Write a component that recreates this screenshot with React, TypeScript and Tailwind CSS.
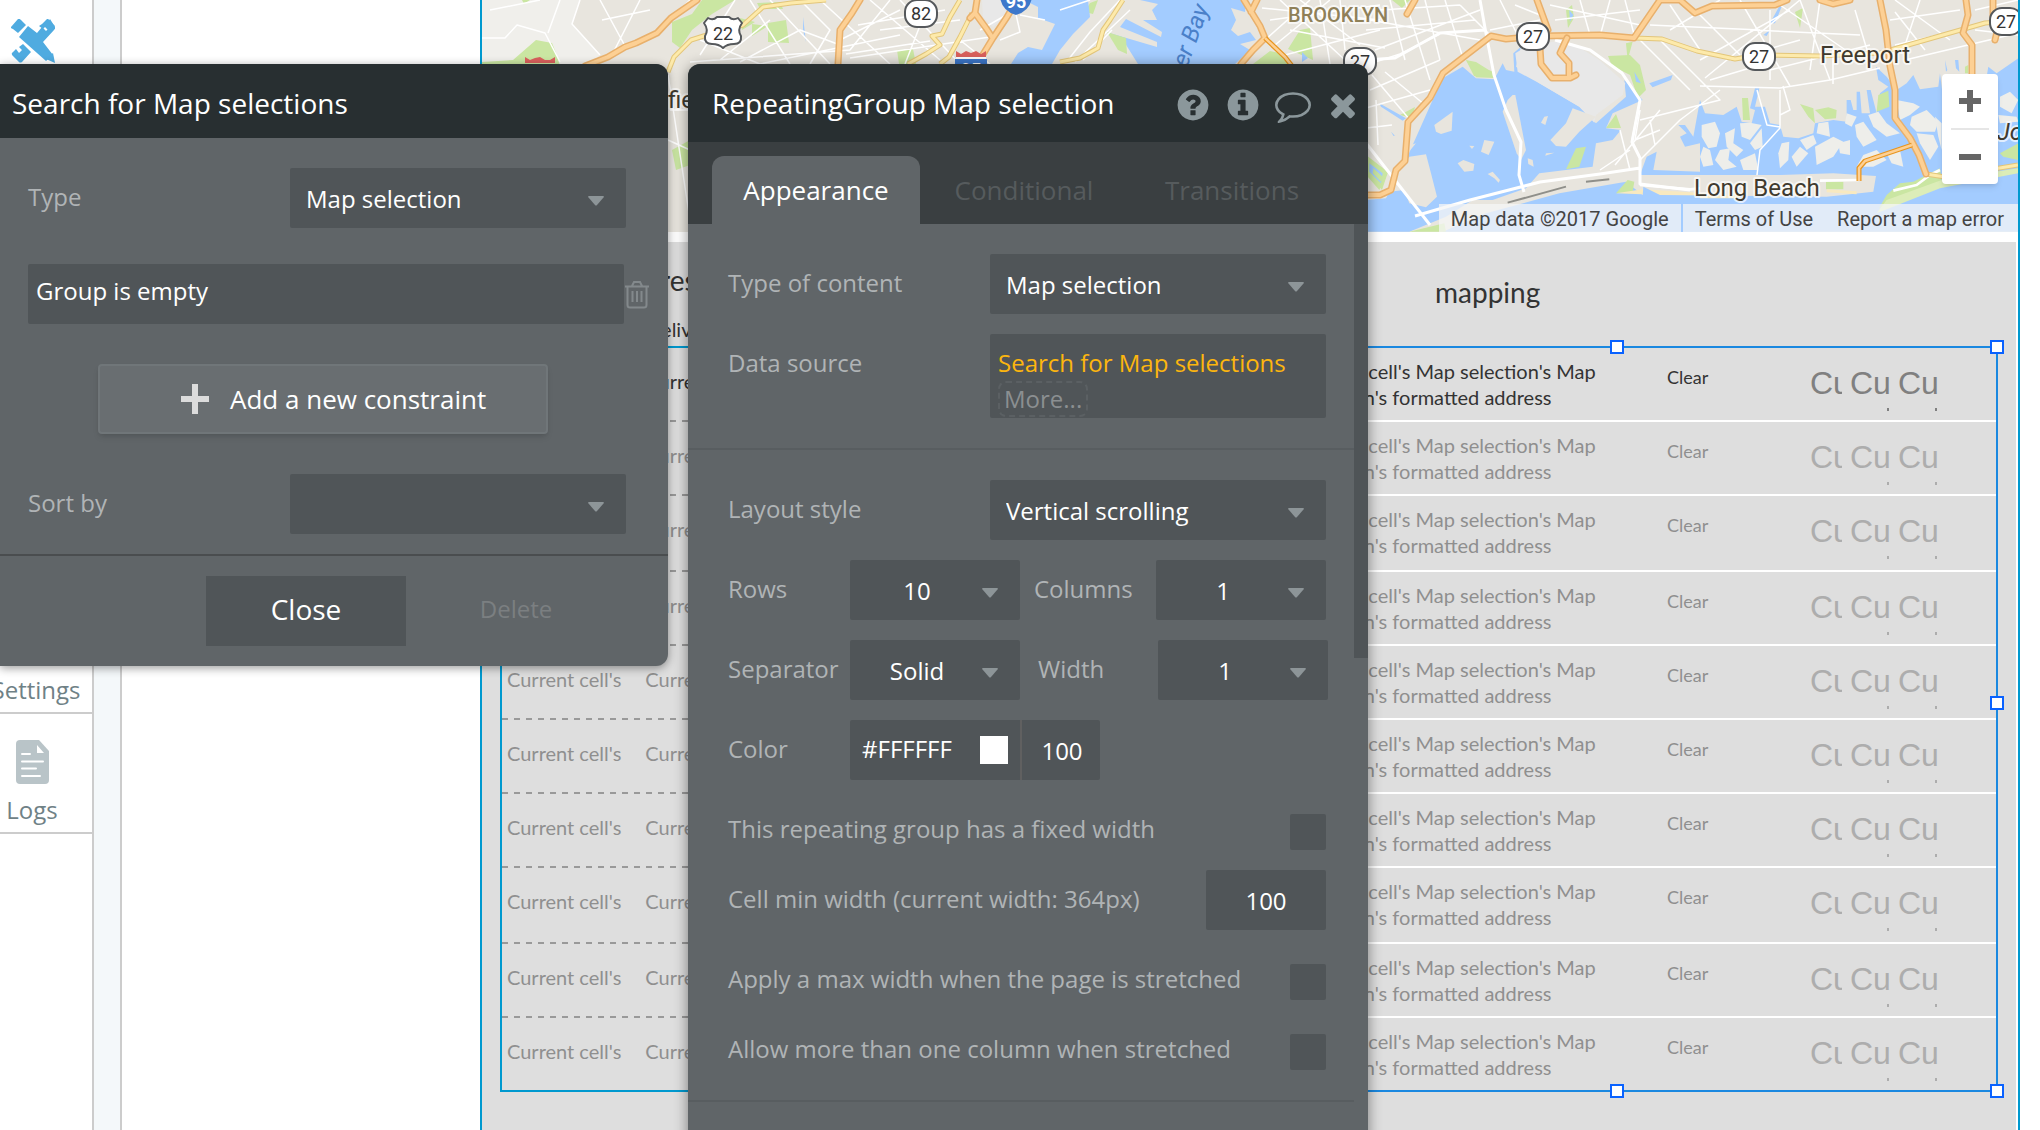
import { FC, ReactNode } from 'react';

const TITLE = 'font-["Open_Sans",sans-serif] text-[28px]';
const BODY = 'font-["Open_Sans",sans-serif] text-2xl';
const ACTION = 'font-["Open_Sans",sans-serif] text-[26px]';

/* ---------- icons ---------- */

const ICONS = {
  question:
    'M1024 1376v-192q0-14-9-23t-23-9h-192q-14 0-23 9t-9 23v192q0 14 9 23t23 9h192q14 0 23-9t9-23zm256-672q0-88-55.5-163t-138.5-116-170-41q-243 0-371 213-15 24 8 42l132 100q7 6 19 6 16 0 25-12 53-68 86-92 34-24 86-24 48 0 85.5 26t37.5 59q0 38-20 61t-68 45q-63 28-115.5 86.5t-52.5 125.5v36q0 14 9 23t23 9h192q14 0 23-9t9-23q0-19 21.5-49.5t54.5-49.5q32-18 49-28.5t46-35 44.5-48 28-60.5 12.5-81zm384 192q0 209-103 385.5t-279.5 279.5-385.5 103-385.5-103-279.5-279.5-103-385.5 103-385.5 279.5-279.5 385.5-103 385.5 103 279.5 279.5 103 385.5z',
  info: 'M1152 1376v-160q0-14-9-23t-23-9h-96v-512q0-14-9-23t-23-9h-320q-14 0-23 9t-9 23v160q0 14 9 23t23 9h96v320h-96q-14 0-23 9t-9 23v160q0 14 9 23t23 9h448q14 0 23-9t9-23zm-128-896v-160q0-14-9-23t-23-9h-192q-14 0-23 9t-9 23v160q0 14 9 23t23 9h192q14 0 23-9t9-23zm640 416q0 209-103 385.5t-279.5 279.5-385.5 103-385.5-103-279.5-279.5-103-385.5 103-385.5 279.5-279.5 385.5-103 385.5 103 279.5 279.5 103 385.5z',
  comment:
    'M896 384q-204 0-381.5 69.5t-282 187.5-104.5 255q0 112 71.5 213.5t201.5 175.5l87 50-27 96q-24 91-70 172 152-63 275-171l43-38 57 6q69 8 130 8 204 0 381.5-69.5t282-187.5 104.5-255-104.5-255-282-187.5-381.5-69.5zm896 512q0 174-120 321.5t-326 233-450 85.5q-70 0-145-8-198 175-460 242-49 14-114 22h-5q-15 0-27-10.5t-16-27.5v-1q-3-4-.5-12t2-10 4.5-9.5l6-9 7-8.500 8-9q7-8 31-34.5t34.5-38 31-39.5 32.5-51 27-59 26-76q-157-89-247.5-220t-90.5-281q0-174 120-321.5t326-233 450-85.5 450 85.5 326 233 120 321.5z',
  times:
    'M1490 1322q0 40-28 68l-136 136q-28 28-68 28t-68-28l-294-294-294 294q-28 28-68 28t-68-28l-136-136q-28-28-28-68t28-68l294-294-294-294q-28-28-28-68t28-68l136-136q28-28 68-28t68 28l294 294 294-294q28-28 68-28t68 28l136 136q28 28 28 68t-28 68l-294 294 294 294q28 28 28 68z',
};

const HeaderButton: FC<{ icon: keyof typeof ICONS; label: string }> = ({ icon, label }) => (
  <button type="button" aria-label={label} className="text-[#8b979b]">
    <svg viewBox="0 0 1792 1792" className="size-9" fill="currentColor">
      <path d={ICONS[icon]} />
    </svg>
  </button>
);

const DesignIcon = () => (
  <svg viewBox="0 0 44 44" className="h-11 w-11" fill="#4fabe0">
    <path d="M0 8 7 0Q8-1 10 1L15 6 7 14 2 10Q-1 9 0 8Z" />
    <path d="M17 7 26 14 31 8 35 12 38 9 35 6 39 0 44 8Q45 9 43 11L32 23 42 36 35 42 8 18Z" />
    <path d="M31 5 36 0Q37-1 38 1L44 7 39 13 34 8 32 10 28 7Z" />
    <path d="M12 25 20 33 11 43Q9 44 8 43L1 36Q0 34 2 33L5 30 8 34 11 31 8 28Z" />
    <path d="M35 40 42 34 44 44Z" />
  </svg>
);

const LogsIcon = () => (
  <svg viewBox="0 0 33 44" className="h-11 w-[33px]">
    <path d="M4 0H23L33 11V40Q33 44 29 44H4Q0 44 0 40V4Q0 0 4 0Z" fill="#b9c4c8" />
    <path d="M21 5 28 13H21Z" fill="#fff" />
    <path d="M6 14H14M6 21.500H27M6 28.500H20M6 36H24" stroke="#fff" strokeWidth="2" strokeLinecap="round" />
  </svg>
);

const TrashIcon = () => (
  <svg viewBox="0 0 26 29" className="h-[29px] w-[26px]" fill="none" stroke="#83898c" strokeWidth="2">
    <path d="M1 6.500H25M8 6 10 2H16L18 6M3.500 7V25Q3.500 27.500 6 27.500H20Q22.500 27.500 22.500 25V7M8.500 11V22M13 11V22M17.500 11V22" />
  </svg>
);

/* ---------- form controls ---------- */

interface DropdownProps {
  id: string;
  value?: string;
  centered?: boolean;
  className: string;
}

const Dropdown: FC<DropdownProps> = ({ id, value = '', centered, className }) => (
  <div className={`relative h-15 ${className}`}>
    <select
      id={id}
      defaultValue={value}
      className={`${BODY} h-full w-full appearance-none rounded-xs bg-[#505558] pt-0.5 text-white ${
        centered ? 'pr-9 text-center' : 'pl-4'
      }`}
    >
      <option>{value}</option>
    </select>
    <svg viewBox="0 0 16 10" className="pointer-events-none absolute top-7 right-[22px] h-2.5 w-4" fill="#8d9598">
      <path d="M1 0H15Q16.500 0 15.500 1.500L9 9Q8 10 7 9L.5 1.500Q-.5 0 1 0Z" />
    </svg>
  </div>
);

const Label: FC<{ htmlFor: string; className?: string; children: ReactNode }> = ({ htmlFor, className = '', children }) => (
  <label htmlFor={htmlFor} className={`${BODY} leading-[58px] whitespace-nowrap text-[#b0b4b6] ${className}`}>
    {children}
  </label>
);

const CheckRow: FC<{ id: string; text: string }> = ({ id, text }) => (
  <div className="flex h-[50px] items-start justify-between">
    <Label htmlFor={id}>{text}</Label>
    <input id={id} type="checkbox" className="size-9 appearance-none self-end rounded-xs bg-[#505558]" />
  </div>
);

/* ---------- map ---------- */

const MARSH = [
  '5,375 45,365 60,400 50,440 25,445 5,410',
  '75,400 105,385 100,430 130,450 110,470 80,440',
  '120,370 150,368 185,375 150,420 125,410',
  '150,430 185,385 188,440 165,450',
  '60,450 90,445 85,480 110,500 70,510 45,480',
  '10,440 30,450 40,495 10,500 0,470',
  '120,480 165,460 175,510 130,510',
  '245,430 268,425 265,480 240,505 235,460',
  '300,420 340,405 350,430 320,450',
  '275,470 300,440 325,460 290,500',
  '355,370 385,365 390,410 350,400',
  '345,440 400,410 430,425 400,470 350,495',
  '440,340 470,350 455,380 435,370',
  '465,375 490,365 530,420 490,440 470,410',
  '415,430 450,420 450,465 420,460',
  '505,345 535,335 560,370 600,400 560,410 520,380',
  '490,465 530,450 560,480 520,500 470,500',
  '560,460 600,450 610,500 575,490',
  '590,300 640,310 660,320 630,345 600,360',
  '635,350 680,330 715,365 705,395 650,395 630,375',
  '650,400 700,405 715,440 690,480 660,430',
  '705,350 725,370 725,450 715,410',
  '900,290 930,275 955,300 935,340 900,320',
  '895,345 950,350 955,365 900,370',
];

const ISLANDS = [
  '260,335 205,375 210,395 225,402 257,392',
  '355,420 385,425 368,465 345,455',
  '275,490 292,480 325,492 322,512 295,515',
  '310,437 325,438 318,447',
  '365,522 380,515 402,540 398,548 385,535',
  '485,475 500,480 503,500 487,492',
  '535,350 546,348 538,375 525,368',
  '540,460 565,458 538,467',
  '440,285 448,285 480,450 465,480 452,460 410,335 425,300',
  '620,325 690,350 640,395 600,440 570,438 553,420 600,370',
  '40,420 110,400 120,440 150,430 125,460 70,480 40,460',
  '130,470 180,463 195,520 213,590 180,622 130,610 115,570 70,575 90,520',
];

const ORANGE = [
  'M697 0 671 18 657 33 636 43 625 47 608 57 585 66',
  'M860 0 852 13 840 30 838 64',
  'M977 0 975 13 970 18M975 13 986 28 992 37M1017 0 1007 17 993 38 982 56 978 66',
  'M1244 0 1260 26 1265 38 1253 50 1241 64M1257 0 1251 12',
  'M1415 0 1407 14',
  'M1366 195H1380L1391 190 1396 170 1405 161 1408 122 1430 98 1443 73 1491 36 1506 39 1540 36 1600 35 1634 38 1660 0H1680L1695 13 1712 6 1775 5 1787 0M1820 0 1833 4 1850 0',
  'M1537 0 1548 30M1540 48 1541 64 1552 78 1570 78 1576 75M1567 38 1560 53 1569 63V77',
  'M1880 0 1886 30 1890 66 1895 90 1895 118 1910 138 1919 155 1926 174',
  'M1966 0 1968 15 1963 33 1972 45V80M1993 0V20L1997 32 1995 40',
];

const YELLOW = [
  'M668 72 674 57 691 40 710 34 743 25 763 7 791 3 826 0',
  'M960 0 950 17 942 34 932 36 940 45 926 54 908 64',
  'M972 13 960 37 949 57 940 64',
  'M1123 0 1110 20 1103 30 1098 48 1080 58 1060 62',
  'M1634 38 1662 39 1697 51 1735 59 1759 55 1820 56 1880 53 1985 23 1998 22',
  'M1926 174 1945 177 2018 165',
];

const STREETS = [
  'M482 38 505 38 517 25 545 33 560 62M490 10 540 0M580 0 572 24 600 55M560 0 548 33',
  'M600 0 625 46M640 0 612 55M650 10 602 20M690 0 655 36M668 75 690 220M670 110H690M668 140 690 150',
  'M700 55 735 0M720 60 770 20M740 62 800 30 840 45M750 0 790 64M700 40 760 64 900 35M690 62 850 50M770 0 830 64M800 0 830 30 810 64M820 0 890 64M840 40 900 10M870 0 940 60M850 50 890 0M880 30 960 20M858 25 945 10M846 54 930 41M850 58 990 37M900 0 960 64M930 0 905 64M960 40 990 64M980 30 1015 10 1020 32 1000 40M1020 15 1045 20',
  'M1068 60 1090 32 1120 0M1075 62 1130 10M1083 60 1112 30M1090 0 1060 10',
  'M1265 40 1310 0M1275 45 1330 0M1280 0 1345 60M1262 8 1380 20M1270 20 1380 5M1290 30 1385 48M1300 0 1360 45M1320 0 1330 64M1340 0 1345 50M1285 55 1380 30',
  'M1366 65 1400 54 1440 34M1370 20 1480 40M1366 30 1475 20M1380 10 1460 5M1375 50 1480 10M1390 0 1405 60M1405 0 1430 80M1425 0 1440 60M1445 0 1462 55M1460 5 1490 35M1370 90 1440 60M1366 108 1430 90M1372 75 1410 120M1376 100 1378 145M1366 128 1392 125M1385 72 1425 105',
  'M1490 30 1540 20M1500 0 1520 40M1515 5 1540 15M1550 5 1640 25M1555 20 1640 10M1580 0 1590 35M1610 0 1600 36M1625 0 1635 38M1640 40 1690 90M1660 40 1720 100 1640 120M1650 25 1760 30M1670 5 1700 50M1670 30 1720 0M1700 15 1740 55M1700 60 1790 10M1710 80 1760 65M1705 78 1800 0M1700 86 1780 88 1830 80 1880 68',
  'M1640 110 1635 140 1660 130M1640 160 1680 120 1720 90M1630 150 1600 170M1615 165 1660 110M1620 130 1630 170M1650 120 1655 145M1632 140 1640 100M1780 90V128L1760 150 1757 175M1783 86 1790 110 1780 115M1757 90 1767 125 1780 127',
  'M1730 60 1800 40M1740 0 1790 86M1770 10V80M1800 0 1830 80M1750 30 1860 35M1770 70 1870 45M1780 5 1860 60M1820 0 1810 70M1855 10 1870 60M1895 45 1960 30M1895 0 1950 40M1920 0 1905 45M1890 20 1960 10M1905 60 2010 35M1975 30 2018 35M1975 10 2018 0M1833 50V84M1895 12 1925 50',
];

const RouteBadge: FC<{ x: number; y: number; n: string }> = ({ x, y, n }) => (
  <g>
    <rect x={x - 16} y={y - 13} width="32" height="27" rx="12" fill="#fff" stroke="#55585b" strokeWidth="2" />
    <text x={x} y={y + 7} textAnchor="middle" fontSize="18" fill="#333">
      {n}
    </text>
  </g>
);

const MapDrawing = () => (
  <svg
    viewBox="482 0 1536 232"
    preserveAspectRatio="xMaxYMin slice"
    className="block h-[232px] w-full font-[Roboto,sans-serif]"
    fill="none"
    strokeLinejoin="round"
  >
    <rect x="482" width="1536" height="232" fill="#e8e5de" />
    <path d="M482 0H580L572 24 600 55 590 64H482Z" fill="#f0efeb" />

    {/* parks */}
    <g fill="#cae6a2">
      <path d="M522 0H530L524 4ZM482 62 513 60 536 40 552 43 556 53 560 66H482ZM672 22 692 14 702 0H735L712 14 692 30 680 48 672 42Z" />
      <path d="M740 18 755 22 742 30ZM768 23 786 20 789 43 768 42ZM752 24 768 26 752 36ZM757 3 780 2 783 9 760 9ZM897 50 913 49 916 64H899ZM672 150 690 140V165L676 170Z" />
      <path d="M1300 30 1310 28 1313 60 1288 49ZM1090 3 1098 0 1093 14 1085 12Z" />
      <path d="M1253 64 1270 51 1284 54 1292 64ZM1392 0H1410L1402 8Z" />
      <path d="M1366 155 1388 172 1382 190 1366 170ZM1466 60 1476 62 1492 72 1494 77 1474 76ZM1400 115 1415 107 1412 118Z" />
      <path d="M1566 10 1572 5 1574 18 1568 28ZM1608 56 1630 55 1640 65 1646 90 1638 98 1630 75 1612 66Z" />
      <path d="M1606 128 1616 114 1621 128ZM1795 12 1803 8 1800 28ZM1742 98H1748L1750 120 1743 120Z" />
    </g>

    {/* bays west of Brooklyn */}
    <g fill="#a3ccff">
      <path d="M1028 0H1088L1090 17 1073 34 1060 50 1052 64H1011L1018 53 1028 47 1042 50 1055 24 1038 18 1038 7 1030 3Z" />
      <path d="M1140 0 1158 4 1152 10 1157 20 1143 20 1162 32 1161 37 1126 19 1120 27 1157 42 1157 47 1106 32 1123 40 1138 64H1235L1250 50 1240 44 1256 40 1250 32 1238 36 1231 30 1236 20 1231 8 1245 12 1246 0Z" />
      <path d="M803 17 806 42 803 30ZM1302 52 1308 58 1302 62Z" />
    </g>
    <path d="M1107 32 1126 38 1127 54 1118 50Z" fill="#cae6a2" />
    <path d="M982 0H1003L1007 15 993 27 983 17Z" fill="#e8e8e8" />

    {/* Jamaica bay */}
    <g transform="translate(1366 0) scale(.3333)">
      <path
        d="M235 238 262 225 240 285 220 260ZM230 235 290 200 330 235 385 238 410 190 420 210 445 215 442 160 465 140 450 200 520 250 640 320 690 370 780 290 775 240 830 300 740 340 720 385 765 390 740 420 690 430 680 500 600 510 520 520 480 565 380 600 320 600 240 650 130 695H0V600L60 595 120 480 200 300Z"
        fill="#a3ccff"
      />
      <path d="M40 310 120 355 110 362 45 320ZM75 395 120 440 110 455ZM230 695 360 640 580 580 780 545 830 585 1020 590V695Z" fill="#a3ccff" />
      <path d="M448 160 480 140 560 125 620 130 700 180 778 250 770 285 690 345 685 368 640 320 520 250 455 215Z" fill="#e8e8e8" />
      {ISLANDS.map((points) => (
        <polygon key={points} points={points} fill="#e8e5de" />
      ))}
      <path d="M630 445 660 440 640 500 600 508ZM10 480 65 520 40 570 5 530ZM300 180 345 205 385 215V234L330 232ZM750 580 785 540 805 545 800 575ZM130 695 235 670 240 695ZM780 130 800 125 785 180Z" fill="#cae6a2" />
      <path d="M10 490 50 520 45 550 10 515Z" fill="#a3ccff" />
      <path d="M22 505 50 530 45 545 20 520Z" fill="#cae6a2" />
      <path d="M850 250 920 225 915 240 860 262ZM805 215 825 250 810 245ZM610 30 622 45 612 65Z" fill="#a3ccff" />
      <path d="M750 580 830 568 1020 580V590Z" fill="#f8e9c0" />
      <path d="M425 608 600 560M660 545 730 538" stroke="#8f8f8a" strokeWidth="6" />
    </g>

    {/* south shore marshes */}
    <g transform="translate(1700 0) scale(.3333)">
      <path
        d="M0 300 15 340 70 345 110 320 125 365 155 370 165 330 150 325 165 265 178 265 165 320 195 320 210 370 240 375 250 410 295 415 340 400 345 370 400 360 440 365 440 300 452 300 460 330 470 330 470 275 480 275 485 340 510 340 500 270 512 270 530 340 540 280 565 260 535 240 528 200 560 230 590 270 620 250 640 225 660 268 715 260 720 220 730 300 800 240 860 230 865 200 890 220 955 175V695H-180L-170 560-120 585 380 590 520 575 528 528 400 520 240 525H-180L-160 470-130 455-140 510 0 515 0 430-45 440-60 410-40 400-65 375-45 375-20 410Z"
        fill="#a3ccff"
      />
      <path d="M765 180 775 180 778 215 768 205ZM735 180 742 210 738 215ZM210 70 240 15 248 12 225 70ZM190 105 210 90 200 108Z" fill="#a3ccff" />
      {MARSH.map((points) => (
        <polygon key={points} points={points} fill="#eeeeea" />
      ))}
      <path d="M300 312 340 325 345 370 325 350ZM345 330 385 322 410 330 408 355 375 358ZM535 285 565 272 568 320 530 335ZM378 545 430 545V568H378ZM537 625 560 585 600 550 640 545 720 505 725 540 690 570 620 600ZM795 200 805 195V220H795ZM900 460 955 430V480L910 470Z" fill="#cae6a2" />
      <path d="M530 640 560 600 725 540 955 505V520L720 565Z" fill="#dcedb8" />
      <path d="M0 590H120M380 572 470 578" stroke="#f8e9c0" strokeWidth="9" />
      <path d="M-180 555-30 568 0 565M360 542 475 540M580 572 650 555 690 525 720 510" stroke="#fff" strokeWidth="8" />
    </g>

    {/* roads */}
    {STREETS.map((d) => (
      <path key={d} d={d} stroke="#fff" strokeWidth="1.5" />
    ))}
    <path
      d="M1480 0 1485 28 1494 75 1506 110 1521 142 1519 175 1524 192M1366 143 1430 225M1555 40 1590 50 1622 73 1640 100 1632 142 1640 158V184L1690 190M1415 216 1470 200 1540 182 1600 174 1640 168M1366 60 1395 58 1440 33 1486 30"
      stroke="#fff"
      strokeWidth="3"
    />
    {YELLOW.map((d) => (
      <g key={d}>
        <path d={d} stroke="#e3c67a" strokeWidth="5" />
        <path d={d} stroke="#fdeaab" strokeWidth="3" />
      </g>
    ))}
    {ORANGE.map((d) => (
      <g key={d} strokeLinecap="round">
        <path d={d} stroke="#e8b06c" strokeWidth="7" />
        <path d={d} stroke="#fdd094" strokeWidth="4" />
      </g>
    ))}
    <path d="M1265 38 1285 57 1292 66M1912 145 1865 161 1859 168V181" stroke="#e8951f" strokeWidth="5" />
    <path d="M1265 38 1285 57 1292 66M1912 145 1865 161 1859 168V181" stroke="#fdd094" strokeWidth="2.500" />

    {/* shields and place names */}
    <path d="M708 18Q713 21 717 17H729Q733 21 738 18L742 23Q737 30 741 36 742 44 734 44 727 44 723 48 719 44 712 44 704 44 705 36 709 30 704 23Z" fill="#fff" stroke="#55585b" strokeWidth="2" />
    <text x="723" y="40" textAnchor="middle" fontSize="18" fill="#333">22</text>
    <path d="M1000-8H1032Q1033 10 1016 15 999 10 1000-8Z" fill="#3d78cb" />
    <text x="1016" y="8" textAnchor="middle" fontSize="18" fontWeight="700" fill="#fff">95</text>
    <path d="M956 51 961 54 966 51 971 53 976 51 981 54 986 51V57H956ZM525 57 530 60 535 58 540 57 545 60 550 60 555 57V63H525Z" fill="#d9605c" />
    <path d="M956 57H986V59H956Z" fill="#fff" />
    <path d="M955 59H987V80H955Z" fill="#3d78cb" />
    <text x="971" y="76" textAnchor="middle" fontSize="18" fontWeight="700" fill="#fff">95</text>
    <RouteBadge x={921} y={13} n="82" />
    <RouteBadge x={1360} y={61} n="27" />
    <RouteBadge x={1533} y={36} n="27" />
    <RouteBadge x={1759} y={56} n="27" />
    <RouteBadge x={2006} y={21} n="27" />
    <text transform="translate(1209 8) rotate(-70)" textAnchor="end" fontSize="24" fontStyle="italic" fill="#4a80c9">Upper Bay</text>
    <g stroke="#fff" strokeOpacity=".7" strokeWidth="4" paintOrder="stroke">
      <text x="1288" y="22" fontSize="20" fontWeight="500" fill="#8f8058">BROOKLYN</text>
      <g fontSize="24" fill="#3f3a2e">
        <text x="1820" y="63">Freeport</text>
        <text x="1694" y="196">Long Beach</text>
        <text x="1997" y="140" fontStyle="italic">Jones</text>
        <text x="668" y="108">field</text>
      </g>
    </g>
  </svg>
);

const MapPanel = () => (
  <div className="relative">
    <MapDrawing />
    <div className="absolute top-[74px] right-5 flex h-[110px] w-14 flex-col items-center rounded-sm bg-white shadow-md">
      <button type="button" aria-label="Zoom in" className="flex flex-1 items-center">
        <svg viewBox="0 0 22 22" className="size-[22px]" fill="#666">
          <path d="M8 0H14V8H22V14H14V22H8V14H0V8H8Z" />
        </svg>
      </button>
      <div className="h-0.5 w-[38px] bg-[#e6e6e6]" />
      <button type="button" aria-label="Zoom out" className="flex flex-1 items-center">
        <svg viewBox="0 0 22 22" className="size-[22px]" fill="#666">
          <path d="M0 8H22V14H0Z" />
        </svg>
      </button>
    </div>
    <div className="absolute right-0 bottom-0 flex h-7 font-[Roboto,sans-serif] text-xl leading-[30px] whitespace-nowrap text-[#444]">
      <span className="bg-[#f5f5f5]/75 px-3">Map data ©2017 Google</span>
      <a href="#terms" className="ml-0.5 bg-[#f5f5f5]/75 px-3">Terms of Use</a>
      <a href="#report" className="bg-[#f5f5f5]/75 pr-3.5 pl-3">Report a map error</a>
    </div>
  </div>
);

/* ---------- page canvas ---------- */

const ROW_HEIGHTS = [74, 74, 76, 74, 74, 74, 74, 76, 74, 72];

const Initials: FC<{ dot?: boolean; className: string }> = ({ dot, className }) => (
  <div className={`relative h-12 overflow-hidden font-["Liberation_Sans",sans-serif] text-[32px] leading-9 ${className}`}>
    Cu
    {dot && <span className="absolute right-px bottom-0.5 h-[3px] w-0.5 bg-current" />}
  </div>
);

const Handle: FC<{ className: string }> = ({ className }) => (
  <span className={`absolute size-3.5 border-2 border-[#0a62ff] bg-white ${className}`} />
);

const LeftGroup = () => (
  <div className="flex-1 border-2 border-r-0 border-[#0099cf]">
    {ROW_HEIGHTS.map((height, i) => (
      <div
        key={i}
        style={{ height }}
        className={`flex gap-6 overflow-hidden pt-5 pl-[5px] text-xl leading-[26px] whitespace-nowrap ${
          i === 0 ? 'text-[#333]' : 'text-[#8f8f8f]'
        } ${
          i === 9
            ? ''
            : 'bg-[repeating-linear-gradient(90deg,#999_0_6px,transparent_6px_12px)] bg-[length:100%_2px] bg-bottom bg-no-repeat'
        }`}
      >
        <span>Current cell's</span>
        <span>Current cell's</span>
      </div>
    ))}
  </div>
);

const RightGroup = () => (
  <div className="relative w-[762px] border-2 border-l-0 border-[#1a88e0]">
    {ROW_HEIGHTS.map((height, i) => (
      <div
        key={i}
        style={{ height }}
        className={`flex items-start pr-[58px] pl-[60px] ${i === 0 ? 'text-[#333]' : 'text-[#8f8f8f]'} ${
          i === 9 ? '' : 'border-b-2 border-white'
        }`}
      >
        <p className="w-[310px] pt-2.5 text-xl leading-[26px]">Current cell's Map selection's Map selection's formatted address</p>
        <p className="flex-1 pt-[15px] pl-[61px] text-lg leading-7">Clear</p>
        <div className={`flex gap-2 pt-[17px] ${i === 0 ? 'text-[#808080]' : 'text-[#adadad]'}`}>
          <Initials className="w-8" />
          <Initials dot className="w-10" />
          <Initials dot className="w-10" />
        </div>
      </div>
    ))}
    <Handle className="-top-2 left-[374px]" />
    <Handle className="-top-2 -right-2" />
    <Handle className="top-[348px] -right-2" />
    <Handle className="-bottom-2 left-[374px]" />
    <Handle className="-right-2 -bottom-2" />
  </div>
);

const Canvas = () => (
  <main className="mr-5 ml-[358px] min-w-0 flex-1 border-x-2 border-[#0099cf]">
    <MapPanel />
    <section className="mt-2.5 mr-0.5 h-full bg-[#dedede] px-[18px] font-[Lato,sans-serif]">
      <div className="flex h-[104px] items-start text-[28px] text-[#333]">
        <div className="flex-1 pt-[18px] pl-[110px]">
          <p className="leading-10">Addresses</p>
          <p className="pt-[15px] pl-9 text-xl">Delivery</p>
        </div>
        <p className="w-[762px] pt-[30px] pl-[199px] leading-10">mapping</p>
      </div>
      <div className="flex">
        <LeftGroup />
        <RightGroup />
      </div>
    </section>
  </main>
);

const Sidebar = () => (
  <nav className={`flex w-[94px] flex-none flex-col border-r-2 border-[#ccc] text-[#6f8186] ${BODY}`}>
    <a href="#design" aria-label="Design" className="block pt-[19px] pl-[11px]">
      <DesignIcon />
    </a>
    <a href="#settings" className="mt-[609px] -ml-7 flex h-[42px] justify-center border-b-2 border-[#ccc] pl-2 leading-[36px]">
      Settings
    </a>
    <a href="#logs" className="-ml-7 flex h-[120px] flex-col items-center gap-1.5 border-b-2 border-[#ccc] pt-[26px] leading-10">
      <LogsIcon />
      Logs
    </a>
  </nav>
);

/* ---------- floating editors ---------- */

const SearchEditor = () => (
  <section className="absolute top-16 left-0 w-[668px] rounded-r-xl bg-[#606568] shadow-[0_2px_10px_rgba(0,0,0,0.4)]">
    <h2 className={`${TITLE} h-[74px] rounded-tr-xl bg-[#282f31] pl-3 leading-[78px] text-white`}>Search for Map selections</h2>
    <div className="flex flex-col pt-[30px] pr-[42px] pb-5 pl-7">
      <div className="flex justify-between">
        <Label htmlFor="search-type">Type</Label>
        <Dropdown id="search-type" value="Map selection" className="w-[336px]" />
      </div>
      <div className="mt-9 -mr-7 flex items-center">
        <input
          aria-label="Constraint"
          defaultValue="Group is empty"
          className={`${BODY} h-15 min-w-0 flex-1 rounded-xs bg-[#505558] px-2 pb-2 text-white`}
        />
        <button type="button" aria-label="Delete constraint" className="mr-1">
          <TrashIcon />
        </button>
      </div>
      <button
        type="button"
        className={`${ACTION} mt-10 ml-[70px] flex h-[70px] w-[450px] items-center rounded-sm border-2 border-[#707679] bg-[#696e71] pl-20 text-white shadow-md`}
      >
        <svg viewBox="0 0 30 30" className="size-[30px]" fill="#dcdcdc">
          <path d="M12 0H18V12H29V18H18V30H12V18H1V12H12Z" />
        </svg>
        <span className="pl-5">Add a new constraint</span>
      </button>
      <div className="mt-10 flex justify-between">
        <Label htmlFor="search-sort">Sort by</Label>
        <Dropdown id="search-sort" className="w-[336px]" />
      </div>
    </div>
    <div className="flex items-center border-t-2 border-[#4a4d4f] py-5 pl-[206px]">
      <button type="button" className={`${TITLE} h-[70px] w-[200px] bg-[#505558] pb-1 text-white`}>
        Close
      </button>
      <button type="button" className={`${BODY} w-[220px] pb-1 text-[#7b7f81]`}>
        Delete
      </button>
    </div>
  </section>
);

const TABS = ['Appearance', 'Conditional', 'Transitions'];

const PropertyEditor = () => (
  <section className="absolute top-16 left-[688px] flex h-full w-[680px] flex-col rounded-t-xl bg-[#606568] shadow-[0_2px_14px_rgba(0,0,0,0.45)]">
    <header className="flex h-[78px] flex-none items-center rounded-t-xl bg-[#282f31] pr-[7px] pl-6">
      <h2 className={`${TITLE} flex-1 text-white`}>RepeatingGroup Map selection</h2>
      <div className="flex items-center gap-3.5 pt-1">
        <HeaderButton icon="question" label="Help" />
        <HeaderButton icon="info" label="Info" />
        <HeaderButton icon="comment" label="Comment" />
        <HeaderButton icon="times" label="Close editor" />
      </div>
    </header>
    <div role="tablist" className="flex h-[82px] flex-none items-end bg-[#3a3f41] px-6">
      {TABS.map((tab, i) => (
        <button
          key={tab}
          type="button"
          role="tab"
          aria-selected={i === 0}
          className={`${ACTION} h-[68px] w-52 rounded-t-xl ${i === 0 ? 'bg-[#606568] text-white' : 'text-[#565b5d]'}`}
        >
          {tab}
        </button>
      ))}
    </div>
    <div className="flex min-h-0 flex-1">
      <div className="flex-1">
        <div className="flex flex-col gap-5 border-b-2 border-[#585d60] py-[30px] pr-7 pl-10">
          <div className="flex justify-between">
            <Label htmlFor="content-type">Type of content</Label>
            <Dropdown id="content-type" value="Map selection" className="w-[336px]" />
          </div>
          <div className="flex justify-between">
            <Label htmlFor="data-source">Data source</Label>
            <div className={`${BODY} h-[84px] w-[336px] rounded-xs bg-[#505558] pt-[11px] pl-2 leading-9`}>
              <button id="data-source" type="button" className="block text-[#fdb60e]">
                Search for Map selections
              </button>
              <button type="button" className="block h-9 rounded-lg border-2 border-dashed border-[#5b6063] px-1 leading-8 text-[#8b8f91]">
                More...
              </button>
            </div>
          </div>
        </div>
        <div className="flex flex-col gap-5 border-b-2 border-[#585d60] py-[30px] pr-7 pl-10">
          <div className="flex justify-between">
            <Label htmlFor="layout-style">Layout style</Label>
            <Dropdown id="layout-style" value="Vertical scrolling" className="w-[336px]" />
          </div>
          <div className="flex">
            <Label htmlFor="rows" className="w-[122px]">Rows</Label>
            <Dropdown id="rows" value="10" centered className="w-[170px]" />
            <Label htmlFor="columns" className="flex-1 pl-3.5">Columns</Label>
            <Dropdown id="columns" value="1" centered className="w-[170px]" />
          </div>
          <div className="-mr-0.5 flex">
            <Label htmlFor="separator" className="w-[122px]">Separator</Label>
            <Dropdown id="separator" value="Solid" centered className="w-[170px]" />
            <Label htmlFor="width" className="flex-1 pl-[18px]">Width</Label>
            <Dropdown id="width" value="1" centered className="w-[170px]" />
          </div>
          <div className="flex">
            <Label htmlFor="color" className="w-[122px]">Color</Label>
            <div className="flex h-15 w-[172px] items-center rounded-l-xs border-r-2 border-[#606060] bg-[#505558] px-3">
              <input id="color" defaultValue="#FFFFFF" className={`${BODY} min-w-0 flex-1 pb-0.5 text-white`} />
              <button type="button" aria-label="Pick color" className="size-7 bg-white" />
            </div>
            <input
              aria-label="Opacity"
              defaultValue="100"
              className={`${BODY} h-15 w-[78px] rounded-r-xs bg-[#505558] pl-0.5 text-center text-white`}
            />
          </div>
          <CheckRow id="fixed-width" text="This repeating group has a fixed width" />
          <div className="flex justify-between">
            <Label htmlFor="min-width">Cell min width (current width: 364px)</Label>
            <input
              id="min-width"
              defaultValue="100"
              className={`${BODY} h-15 w-[120px] rounded-xs bg-[#505558] text-center text-white`}
            />
          </div>
          <CheckRow id="max-width" text="Apply a max width when the page is stretched" />
          <CheckRow id="multi-column" text="Allow more than one column when stretched" />
        </div>
      </div>
      <div className="h-[434px] w-3.5 bg-[#4f5457]" />
    </div>
  </section>
);

const App = () => (
  <div className="relative flex h-screen overflow-hidden bg-white">
    <Sidebar />
    <div className="w-7 flex-none border-r-2 border-[#ccc] bg-[#f4f8fa]" />
    <Canvas />
    <SearchEditor />
    <PropertyEditor />
  </div>
);

export default App;
